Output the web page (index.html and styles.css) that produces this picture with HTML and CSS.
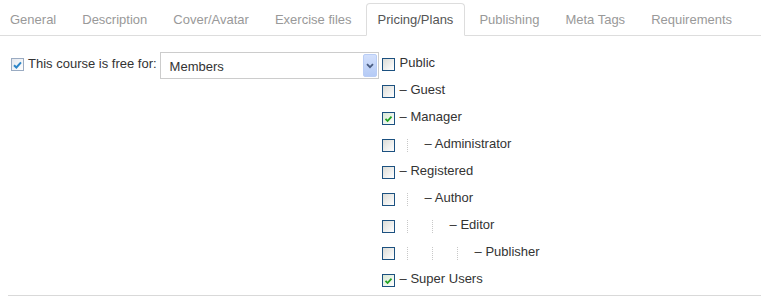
FILE: index.html
```html
<!DOCTYPE html>
<html lang="en">
<head>
    <meta charset="UTF-8">
    <meta name="viewport" content="width=device-width, initial-scale=1.0">
    <title>Course - Pricing/Plans</title>
    <link rel="stylesheet" href="styles.css">
</head>
<body>
    <ul class="tabs">
        <li class="tab">General</li>
        <li class="tab">Description</li>
        <li class="tab">Cover/Avatar</li>
        <li class="tab">Exercise files</li>
        <li class="tab active">Pricing/Plans</li>
        <li class="tab">Publishing</li>
        <li class="tab">Meta Tags</li>
        <li class="tab">Requirements</li>
    </ul>

    <div class="panel">
        <div class="free">
            <span class="main-check">
                <svg width="9" height="8" viewBox="0 0 9 8"><path d="M1 4.2 L3.4 6.5 L8 1.3" fill="none" stroke="#2e86c8" stroke-width="2"/></svg>
            </span>
            <span class="free-label">This course is free for:</span>
            <div class="select">
                <span class="select-value">Members</span>
                <span class="select-btn">
                    <svg width="8" height="6" viewBox="0 0 8 6"><path d="M1 1.2 L4 4.2 L7 1.2" fill="none" stroke="#4a5d82" stroke-width="1.8"/></svg>
                </span>
            </div>
        </div>

        <ul class="groups">
            <li class="group"><span class="cb"></span><span class="name">Public</span></li>
            <li class="group"><span class="cb"></span><span class="name">– Guest</span></li>
            <li class="group"><span class="cb checked"><svg width="9" height="8" viewBox="0 0 9 8"><path d="M1.5 3.8 L3.6 6 L7.5 1.6" fill="none" stroke="#22a322" stroke-width="1.8"/></svg></span><span class="name">– Manager</span></li>
            <li class="group"><span class="cb"></span><span class="guide"></span><span class="name">– Administrator</span></li>
            <li class="group"><span class="cb"></span><span class="name">– Registered</span></li>
            <li class="group"><span class="cb"></span><span class="guide"></span><span class="name">– Author</span></li>
            <li class="group"><span class="cb"></span><span class="guide"></span><span class="guide"></span><span class="name">– Editor</span></li>
            <li class="group"><span class="cb"></span><span class="guide"></span><span class="guide"></span><span class="guide"></span><span class="name">– Publisher</span></li>
            <li class="group"><span class="cb checked"><svg width="9" height="8" viewBox="0 0 9 8"><path d="M1.5 3.8 L3.6 6 L7.5 1.6" fill="none" stroke="#22a322" stroke-width="1.8"/></svg></span><span class="name">– Super Users</span></li>
        </ul>
    </div>
</body>
</html>
```

FILE: styles.css
```css
body {
    font-family: 'Liberation Sans', Arial, sans-serif;
    font-size: 13px;
    color: #333;
    background-color: #fff;
    margin: 0;
    padding: 0;
}

.tabs {
    list-style: none;
    margin: 0;
    padding: 3px 0 0 0;
    display: flex;
    border-bottom: 1px solid #ddd;
}

.tab {
    padding: 8px 11px;
    line-height: 15px;
    border: 1px solid transparent;
    border-radius: 4px 4px 0 0;
    margin-right: 2px;
    margin-bottom: -1px;
    color: #999;
}

.tab:first-child {
    margin-left: -2px;
}

.tab.active {
    color: #555;
    background-color: #fff;
    border-color: #ddd;
    border-bottom-color: #fff;
}

.panel {
    margin-left: 8px;
    padding: 13px 0 3px 3px;
    display: flex;
    align-items: flex-start;
    border-bottom: 1px solid #d9d9d9;
}

.free {
    display: flex;
    align-items: center;
    margin-top: 3px;
    height: 27px;
}

.main-check {
    width: 11px;
    height: 11px;
    border: 1px solid #9aabc2;
    background: linear-gradient(135deg, #e4e8ee, #fff);
    display: flex;
    align-items: center;
    justify-content: center;
    margin: 0 4px 2px 0;
}

.free-label {
    margin-bottom: 4px;
}

.select {
    width: 217px;
    height: 25px;
    border: 1px solid #ccc;
    margin-left: 3px;
    display: flex;
    align-items: center;
    justify-content: space-between;
}

.select-value {
    padding-left: 9px;
    margin-top: 2px;
}

.select-btn {
    width: 14px;
    height: 23px;
    margin-right: 1px;
    border: 1px solid #b9cdf6;
    border-radius: 2px;
    box-sizing: border-box;
    background: linear-gradient(to bottom, #d3e0fc, #b5cbf6);
    display: flex;
    align-items: center;
    justify-content: center;
}

.groups {
    list-style: none;
    margin: 0 0 0 3px;
    padding: 0;
}

.group {
    height: 27px;
    display: flex;
    align-items: center;
}

.cb {
    width: 11px;
    height: 11px;
    border: 1px solid #1c5180;
    background: linear-gradient(135deg, #dcdcd7, #fff);
    margin: 4px 5px 0 0;
    display: flex;
    align-items: center;
    justify-content: center;
}

.cb.checked {
    background: linear-gradient(135deg, #d8e8d4, #fff);
}

/* tree guide: one per nesting level, 25px wide */
.guide {
    width: 25px;
    height: 14px;
    position: relative;
    margin-left: -5px;
    margin-right: 5px;
}

.guide::before {
    content: "";
    position: absolute;
    left: 12px;
    top: 2px;
    height: 13px;
    border-left: 1px dotted #c8c8c8;
}
```
